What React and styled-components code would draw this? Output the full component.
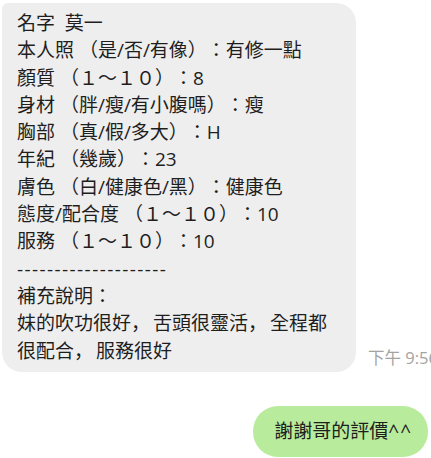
import React from 'react';
import styled, {createGlobalStyle} from 'styled-components';

const GlobalStyle = createGlobalStyle`
   html, body {
      margin: 0;
      background: #ffffff;
      overflow: hidden;
   }
   body {
      font-family: "Open Sans", "Noto Sans CJK TC", sans-serif;
   }
`;

const ChatWrapper = styled.div`
   display: flex;
   flex-direction: column;
   width: 431px;
   height: 458px;
   padding: 3px 0 0 2px;
   box-sizing: border-box;
   overflow: hidden;
`;

const MessageRow = styled.div`
   display: flex;
   align-items: flex-end;
   justify-content: ${props => props.mine ? 'flex-end' : 'flex-start'};
   gap: 12px;
   margin-top: ${props => props.mine ? '34px' : '0'};
`;

const Bubble = styled.div`
   flex-shrink: 0;
   box-sizing: border-box;
   background: ${props => props.mine ? '#b8ec9c' : '#eeeeee'};
   color: #1e1e1e;
   font-size: 19px;
   line-height: 27.3px;
   text-spacing-trim: space-all;
   border-radius: ${props => props.mine ? '25px' : '6px 20px 20px 20px'};
   padding: ${props => props.mine ? '12px 16px 12px 21px' : '7px 10px 7px 15px'};
   width: ${props => props.mine ? 'auto' : '354px'};
   margin-right: ${props => props.mine ? '3px' : '0'};
   white-space: nowrap;
`;

const Line = styled.div`
   height: 27.3px;
   white-space: pre;
`;

const Dashes = styled(Line)`
   letter-spacing: 1.4px;
`;

// comma sits low-left like the desktop client renders it
const Comma = styled.span`
   font-family: "Noto Sans CJK JP", sans-serif;
   line-height: 1;
   margin-right: 3px;
`;

const Caret = styled.span`
   letter-spacing: 1px;
`;

const TimeStamp = styled.span`
   flex-shrink: 0;
   font-size: 16.5px;
   color: #a3a3a3;
   margin-bottom: 3px;
   white-space: nowrap;
`;

const lines = [
    '名字  莫一',
    '本人照 （是/否/有像）：有修一點',
    '顏質 （１～１０）：8',
    '身材 （胖/瘦/有小腹嗎）：瘦',
    '胸部 （真/假/多大）：H',
    '年紀 （幾歲）：23',
    '膚色 （白/健康色/黑）：健康色',
    '態度/配合度 （１～１０）：10',
    '服務 （１～１０）：10',
];

const App = () => {
    return (
        <>
            <GlobalStyle />
            <ChatWrapper>
                <MessageRow>
                    <Bubble>
                        {lines.map((line, i) => (
                            <Line key={i}>{line}</Line>
                        ))}
                        <Dashes>--------------------</Dashes>
                        <Line>補充說明：</Line>
                        <Line>妹的吹功很好<Comma>，</Comma>舌頭很靈活<Comma>，</Comma>全程都</Line>
                        <Line>很配合<Comma>，</Comma>服務很好</Line>
                    </Bubble>
                    <TimeStamp>下午 9:56</TimeStamp>
                </MessageRow>
                <MessageRow mine>
                    <Bubble mine>謝謝哥的評價<Caret>^^</Caret></Bubble>
                </MessageRow>
            </ChatWrapper>
        </>
    );
};

export default App;
